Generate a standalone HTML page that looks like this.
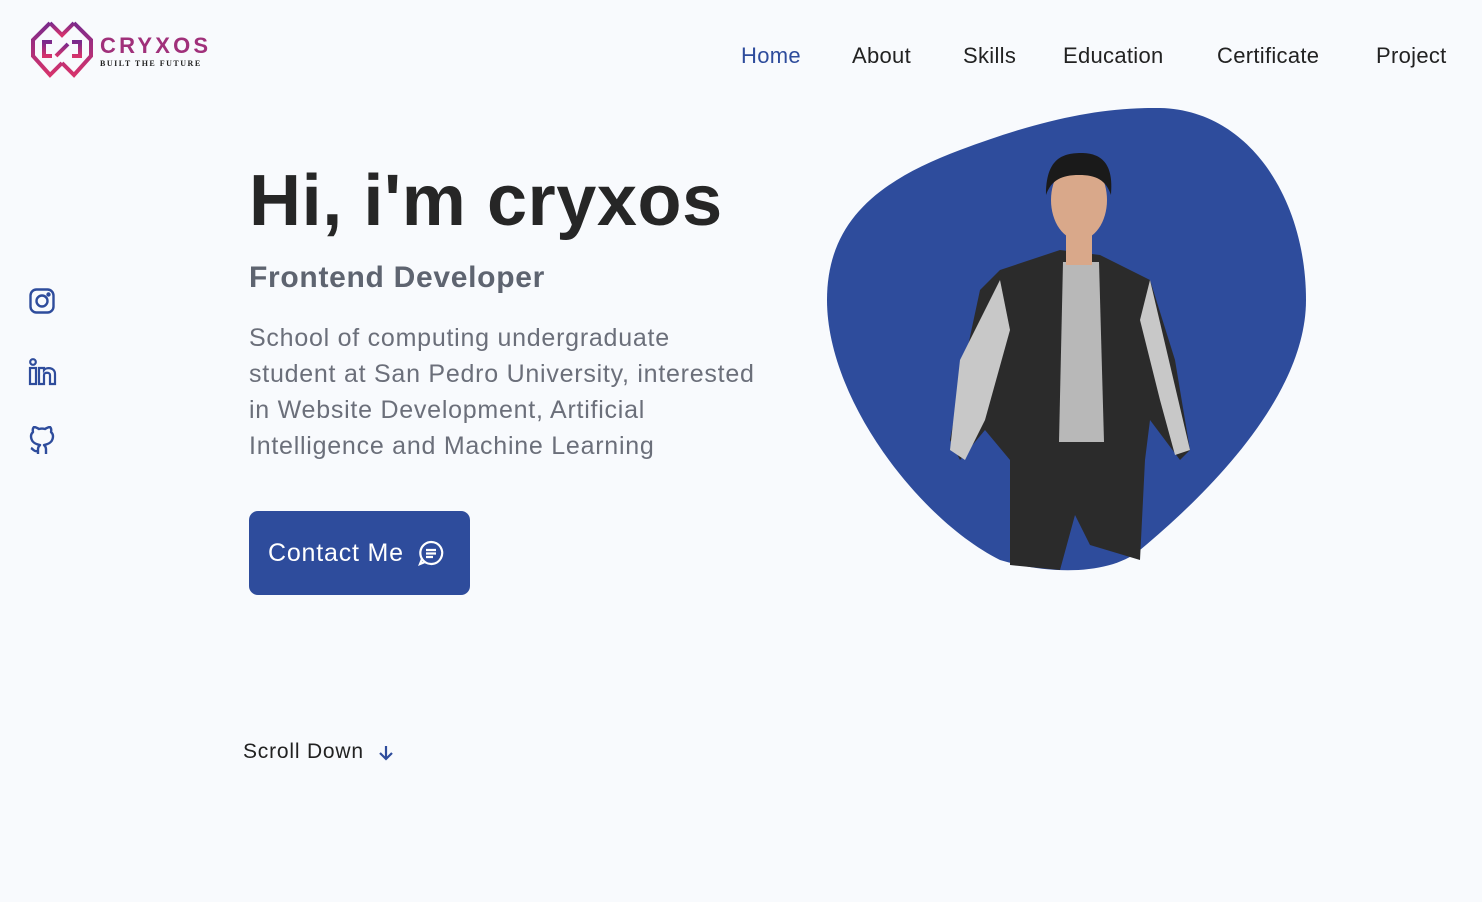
<!DOCTYPE html>
<html><head><meta charset="utf-8"><style>
*{margin:0;padding:0;box-sizing:border-box}
body{width:1482px;height:902px;background:#f8fafd;font-family:"Liberation Sans",sans-serif;position:relative;overflow:hidden;color:#222}
.a{position:absolute}
.nav a{position:absolute;top:43px;font-size:22px;color:#222;text-decoration:none;white-space:nowrap;letter-spacing:0.3px}
h1{position:absolute;left:249px;top:160px;font-size:72px;font-weight:bold;color:#262626;letter-spacing:0.6px;white-space:nowrap}
h3{position:absolute;left:249px;top:261px;font-size:30px;font-weight:bold;color:#5e6470;white-space:nowrap;letter-spacing:0.7px}
p{position:absolute;left:249px;top:320px;width:560px;font-size:25px;line-height:36px;color:#6b6f7a;white-space:nowrap;letter-spacing:0.75px}
.btn{position:absolute;left:249px;top:511px;width:221px;height:84px;background:#2e4c9c;border-radius:9px;color:#fff;font-size:25px;display:flex;align-items:center;padding-left:19px;gap:14px;letter-spacing:0.8px}
</style></head><body>
<svg class="a" style="left:30px;top:20px" width="64" height="58" viewBox="0 0 64 58">
<defs><linearGradient id="g" x1="0" y1="0" x2="0" y2="1"><stop offset="0" stop-color="#7a2a8c"/><stop offset="1" stop-color="#d6336c"/></linearGradient></defs>
<g fill="none" stroke="url(#g)" stroke-width="4"><path d="M20 3L3 20v16l17 19 12-12"/><path d="M44 3l17 17v16L44 55 32 43"/><path d="M20 3l12 12 12-12"/><path d="M22 22h-8v14h8M42 22h8v14h-8"/><path d="M26 36l6-6 6-6"/></g></svg>
<div class="a" style="left:100px;top:33px;font-size:22px;font-weight:bold;color:#a0307a;letter-spacing:3.2px">CRYXOS</div>
<div class="a" style="left:100px;top:59px;font-size:8px;font-weight:bold;color:#222;letter-spacing:1.5px;font-family:'Liberation Serif',serif">BUILT THE FUTURE</div>
<div class="nav"><a style="left:741px;color:#2e4c9c">Home</a><a style="left:852px">About</a><a style="left:963px">Skills</a><a style="left:1063px">Education</a><a style="left:1217px">Certificate</a><a style="left:1376px">Project</a></div>
<svg class="a" style="left:29px;top:288px" width="26" height="26" viewBox="0 0 26 26" fill="none" stroke="#2e4c9c" stroke-width="2.4"><rect x="1.5" y="1.5" width="23" height="23" rx="6"/><circle cx="13" cy="13" r="5.5"/><circle cx="19.5" cy="6.5" r="1" fill="#2e4c9c"/></svg>
<svg class="a" style="left:28px;top:358px" width="29" height="28" viewBox="0 0 29 28" fill="none" stroke="#2e4c9c" stroke-width="2.2"><circle cx="5" cy="4" r="2.8"/><rect x="2" y="10" width="6" height="16"/><path d="M11 26V10h5v2c2-3 11-3 11 4v10h-5V17c0-3-6-3-6 0v9z"/></svg>
<svg class="a" style="left:28px;top:426px" width="28" height="30" viewBox="0 0 28 30" fill="none" stroke="#2e4c9c" stroke-width="2.4" stroke-linejoin="round"><path d="M10 28v-5c0-2 1-3 2-4-5-1-9-3-9-9 0-2 1-3 2-4-0.5-2 0-4 1-5 2 0 3 1 5 2 2-0.6 4-0.6 6 0 2-1 3-2 5-2 1 1 1.5 3 1 5 1 1 2 2 2 4 0 6-4 8-9 9 1 1 2 2 2 4v5"/><path d="M10 25c-4 1-5-2-7-3"/></svg>
<h1>Hi, i'm cryxos</h1>
<h3>Frontend Developer</h3>
<p>School of computing undergraduate<br>student at San Pedro University, interested<br>in Website Development, Artificial<br>Intelligence and Machine Learning</p>
<div class="btn">Contact Me <svg width="26" height="26" viewBox="0 0 26 26" fill="none" stroke="#fff" stroke-width="2.2"><path d="M13 2a11 11 0 1 1-9 17L2 24l5-2A11 11 0 0 1 13 2z"/><path d="M8 10h10M8 13.5h10M8 17h7"/></svg></div>
<div class="a" style="left:243px;top:740px;font-size:21px;color:#222;letter-spacing:0.8px">Scroll Down</div>
<svg class="a" style="left:377px;top:744px" width="18" height="18" viewBox="0 0 18 18" fill="none" stroke="#2e4c9c" stroke-width="2.2"><path d="M9 2v13M3 9l6 6 6-6"/></svg>
<svg class="a" style="left:820px;top:100px" width="500" height="480" viewBox="820 100 500 480">
<path d="M1160 108C1250 110 1306 200 1306 300C1306 400 1200 500 1140 550C1110 575 1050 575 1000 560C920 520 827 400 827 300C827 220 880 180 960 150C1040 120 1100 107 1160 108Z" fill="#2e4c9c"/>
<path d="M1000 270L1060 250 1100 255 1150 280 1175 360 1190 450 1180 460 1150 420 1145 460 1140 560 1090 545 1075 515 1060 570 1010 565 1010 460 985 430 960 460 950 440 965 360 980 290Z" fill="#2b2b2b"/>
<path d="M1063 262h36l5 180h-45z" fill="#b8b8b8"/>
<path d="M1000 280L960 360 950 450 965 460 985 420 1010 330z" fill="#c8c8c8"/>
<path d="M1150 280L1190 450 1175 455 1160 400 1140 320z" fill="#c8c8c8"/>
<ellipse cx="1079" cy="200" rx="28" ry="40" fill="#d9a88a"/>
<path d="M1046 195c0-35 15-42 35-42s33 10 30 42c-5-15-15-20-32-20s-28 5-33 20z" fill="#1a1a1a"/>
<rect x="1066" y="230" width="26" height="35" fill="#d9a88a"/>
</svg>
</body></html>
